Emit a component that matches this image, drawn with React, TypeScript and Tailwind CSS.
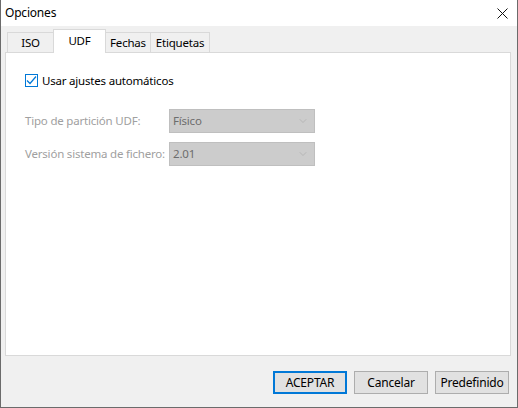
import { ChevronDown } from "lucide-react";

const font = { fontFamily: '"Noto Sans", "Open Sans", sans-serif', letterSpacing: "-0.2px" };

function Tab({ label, width, active }: { label: string; width: string; active?: boolean }) {
  return (
    <div
      className={`-ml-px flex items-center justify-center border border-b-0 border-[#d9d9d9] text-[11.5px] text-black ${width} ${
        active ? "relative z-10 -mb-px h-[24px] bg-white pb-[2px]" : "h-[20px] bg-[#f0f0f0]"
      }`}
    >
      {label}
    </div>
  );
}

function Combo({ value }: { value: string }) {
  return (
    <div className="flex h-[24px] w-[146px] items-center justify-between border border-[#bfbfbf] bg-[#cccccc] pl-[3px] pr-[5px] text-[11.5px] text-[#6d6d6d]">
      <span>{value}</span>
      <ChevronDown className="h-[12px] w-[12px] text-[#a8a8a8]" strokeWidth={1.2} />
    </div>
  );
}

function Button({ label, primary }: { label: string; primary?: boolean }) {
  return (
    <button
      className={`h-[23px] w-[74px] bg-[#e1e1e1] text-[12px] text-black ${
        primary ? "border-2 border-[#0078d7]" : "border border-[#adadad]"
      }`}
    >
      {label}
    </button>
  );
}

export default function App() {
  return (
    <div
      className="flex h-[408px] w-[518px] flex-col border-x border-b border-[#6b6b6b] bg-[#f0f0f0]"
      style={font}
    >
      {/* title bar */}
      <div className="flex h-[26px] items-center justify-between bg-white pl-[4px] pr-[9px]">
        <span className="text-[12px] text-black">Opciones</span>
        <svg width="11" height="11" viewBox="0 0 11 11" className="mt-[1px]">
          <path d="M0.5 0.5 L10.5 10.5 M10.5 0.5 L0.5 10.5" stroke="#111" strokeWidth="1" />
        </svg>
      </div>

      <div className="flex flex-1 flex-col pl-[4px] pr-[6px] pt-[3px]">
        {/* tabs */}
        <div className="flex h-[23px] items-end pl-[3px]">
          <Tab label="ISO" width="w-[47px]" />
          <Tab label="UDF" width="w-[53px]" active />
          <Tab label="Fechas" width="w-[46px]" />
          <Tab label="Etiquetas" width="w-[60px]" />
        </div>

        {/* tab page */}
        <div className="h-[304px] border border-[#d9d9d9] bg-white pl-[19px] pt-[21px]">
          <label className="flex h-[13px] items-center gap-[4px] whitespace-nowrap text-[11.5px] text-black">
            <span className="flex h-[13px] w-[13px] shrink-0 items-center justify-center border border-[#0078d7] bg-white">
              <svg width="11" height="11" viewBox="0 0 11 11">
                <path d="M1 5.5 L4 8.5 L10 1.5" fill="none" stroke="#0078d7" strokeWidth="1.2" />
              </svg>
            </span>
            Usar ajustes automáticos
          </label>

          <div className="mt-[22px] flex flex-col gap-[9px] whitespace-nowrap text-[11.5px] text-[#a0a0a0]">
            <div className="flex h-[24px] items-center">
              <span className="w-[144px]">Tipo de partición UDF:</span>
              <Combo value="Físico" />
            </div>
            <div className="flex h-[24px] items-center">
              <span className="w-[144px]">Versión sistema de fichero:</span>
              <Combo value="2.01" />
            </div>
          </div>
        </div>

        {/* dialog buttons */}
        <div className="mt-[15px] flex justify-end gap-[7px] pr-[2px]">
          <Button label="ACEPTAR" primary />
          <Button label="Cancelar" />
          <Button label="Predefinido" />
        </div>
      </div>
    </div>
  );
}
